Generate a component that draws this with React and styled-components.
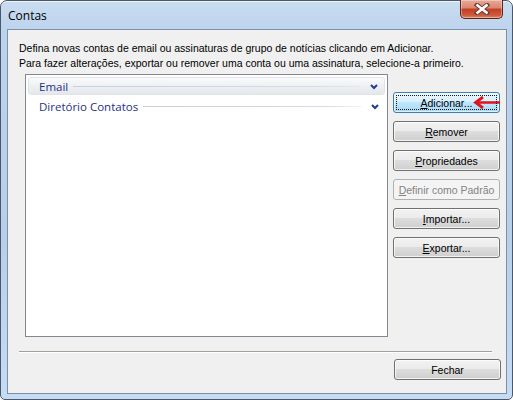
import React from 'react';
import styled, { createGlobalStyle, css } from 'styled-components';

const GlobalStyle = createGlobalStyle`
  html, body {
    margin: 0;
    padding: 0;
    background: #ffffff;
  }
  body {
    font-family: 'Liberation Sans', Arial, sans-serif;
    font-size: 10.5px;
    color: #000;
  }
`;

const Window = styled.div`
  position: relative;
  box-sizing: border-box;
  width: 513px;
  height: 400px;
  display: flex;
  flex-direction: column;
  padding: 0 5px 5px 6px;
  border: 1px solid #4a5868;
  border-radius: 7px 7px 5px 5px;
  background: linear-gradient(180deg, #c9dcf1 0%, #bcd3ec 8%, #b7cfea 60%, #c6dcf4 100%);
  box-shadow: inset 0 1px 0 rgba(255, 255, 255, 0.7);
`;

const TitleBar = styled.div`
  height: 28px;
  display: flex;
  align-items: center;
  padding-left: 1px;
  font-family: 'Open Sans', 'Noto Sans', sans-serif;
  font-size: 12px;
  color: #000;
`;

const CloseButton = styled.div`
  position: absolute;
  top: -1px;
  right: 9px;
  width: 43px;
  height: 19px;
  box-sizing: border-box;
  border: 1px solid #5c2518;
  border-top: none;
  border-radius: 0 0 5px 5px;
  background: linear-gradient(180deg, #e9a997 0%, #d98672 45%, #c43d22 50%, #cf5a3c 85%, #e28a68 100%);
  box-shadow: inset 0 0 0 1px rgba(255, 255, 255, 0.35);
  display: flex;
  align-items: center;
  justify-content: center;
`;

const Client = styled.div`
  flex: 1;
  display: flex;
  flex-direction: column;
  border: 1px solid #7d8fa6;
  background: #f0f0f0;
  padding: 11px 5px 0 11px;
`;

const Intro = styled.p`
  margin: 0;
  line-height: 14.5px;
  white-space: nowrap;
`;

const MainRow = styled.div`
  display: flex;
  gap: 5px;
  margin: 4px 0 0 6px;
`;

const ListBox = styled.div`
  box-sizing: border-box;
  width: 363px;
  height: 263px;
  border: 1px solid #828790;
  background: #ffffff;
  padding: 2px 2px 0 2px;
  display: flex;
  flex-direction: column;
  gap: 2px;
`;

const GroupHeader = styled.div`
  box-sizing: border-box;
  height: 18px;
  display: flex;
  align-items: center;
  padding: 0 6px 0 11px;
  border-radius: 3px;
  font-family: 'Open Sans', 'Noto Sans', sans-serif;
  font-size: 11.5px;
  color: #1e3287;
  ${(p) =>
    p.$selected &&
    css`
      background: linear-gradient(180deg, #fbfbfc 0%, #eef0f3 50%, #e4e7eb 100%);
      border: 1px solid #e0e3e8;
      padding-left: 10px;
    `}
`;

const GroupLine = styled.span`
  flex: 1;
  height: 1px;
  margin: 1px 9px 0 5px;
  background: linear-gradient(90deg, #c5d0e2 0%, #d6dde9 85%, rgba(214, 221, 233, 0.3) 100%);
`;

const Chevron = styled.svg`
  width: 8px;
  height: 6px;
  margin-top: 1px;
`;

const ButtonColumn = styled.div`
  display: flex;
  flex-direction: column;
  gap: 8px;
  margin-top: 18px;
`;

const Button = styled.div`
  position: relative;
  box-sizing: border-box;
  width: 107px;
  height: 21px;
  display: flex;
  align-items: center;
  justify-content: center;
  border: 1px solid #707070;
  border-radius: 3px;
  background: linear-gradient(180deg, #f2f2f2 0%, #ebebeb 48%, #dddddd 50%, #cfcfcf 100%);
  box-shadow: inset 0 0 0 1px rgba(255, 255, 255, 0.75);
  color: #000;
  white-space: nowrap;

  u {
    text-decoration: underline;
    text-underline-offset: 1px;
  }

  ${(p) =>
    p.$hot &&
    css`
      border-color: #3c7fb1;
      background: linear-gradient(180deg, #eaf6fd 0%, #d9f0fc 48%, #bee6fd 50%, #a7d9f5 100%);
      box-shadow: inset 0 0 0 1px rgba(255, 255, 255, 0.6);
      &::after {
        content: '';
        position: absolute;
        inset: 2px;
        border: 1px dotted #1a1a1a;
      }
    `}

  ${(p) =>
    p.$disabled &&
    css`
      border-color: #adb2b5;
      background: #f4f4f4;
      box-shadow: none;
      color: #838383;
    `}
`;

const Arrow = styled.svg`
  position: absolute;
  right: -1px;
  top: 3px;
  width: 27px;
  height: 13px;
`;

const Separator = styled.div`
  height: 1px;
  width: 473px;
  margin-top: 14px;
  background: #a0a0a0;
  box-shadow: 0 1px 0 #ffffff;
`;

const Footer = styled.div`
  display: flex;
  justify-content: flex-end;
  margin-top: 7px;
`;

const buttons = [
  { key: 'A', rest: 'dicionar...', hot: true },
  { key: 'R', rest: 'emover' },
  { key: 'P', rest: 'ropriedades' },
  { key: 'D', rest: 'efinir como Padrão', disabled: true },
  { key: 'I', rest: 'mportar...' },
  { key: 'E', rest: 'xportar...' },
];

function Group({ label, selected }) {
  return (
    <GroupHeader $selected={selected}>
      {label}
      <GroupLine />
      <Chevron viewBox="0 0 8 6">
        <path d="M1 1 L4 4 L7 1" fill="none" stroke="#1e3f8a" strokeWidth="2" />
      </Chevron>
    </GroupHeader>
  );
}

export default function App() {
  return (
    <>
      <GlobalStyle />
      <Window>
        <TitleBar>Contas</TitleBar>
        <CloseButton>
          <svg width="16" height="12" viewBox="0 0 16 12">
            <path d="M3 2 L13 10 M13 2 L3 10" stroke="#6a3a32" strokeWidth="4.4" strokeLinecap="square" />
            <path d="M3.5 2.4 L12.5 9.6 M12.5 2.4 L3.5 9.6" stroke="#ffffff" strokeWidth="2.6" strokeLinecap="square" />
          </svg>
        </CloseButton>
        <Client>
          <Intro>
            Defina novas contas de email ou assinaturas de grupo de notícias clicando em Adicionar.
            <br />
            Para fazer alterações, exportar ou remover uma conta ou uma assinatura, selecione-a primeiro.
          </Intro>
          <MainRow>
            <ListBox>
              <Group label="Email" selected />
              <Group label="Diretório Contatos" />
            </ListBox>
            <ButtonColumn>
              {buttons.map((b) => (
                <Button key={b.key} $hot={b.hot} $disabled={b.disabled}>
                  <span>
                    <u>{b.key}</u>
                    {b.rest}
                  </span>
                  {b.hot && (
                    <Arrow viewBox="0 0 27 13">
                      <path d="M5 6.5 H27" stroke="#e0121c" strokeWidth="2.5" />
                      <path d="M10 1 L2.5 6.5 L10 12" fill="none" stroke="#e0121c" strokeWidth="2.8" strokeLinejoin="miter" />
                    </Arrow>
                  )}
                </Button>
              ))}
            </ButtonColumn>
          </MainRow>
          <Separator />
          <Footer>
            <Button>Fechar</Button>
          </Footer>
        </Client>
      </Window>
    </>
  );
}
